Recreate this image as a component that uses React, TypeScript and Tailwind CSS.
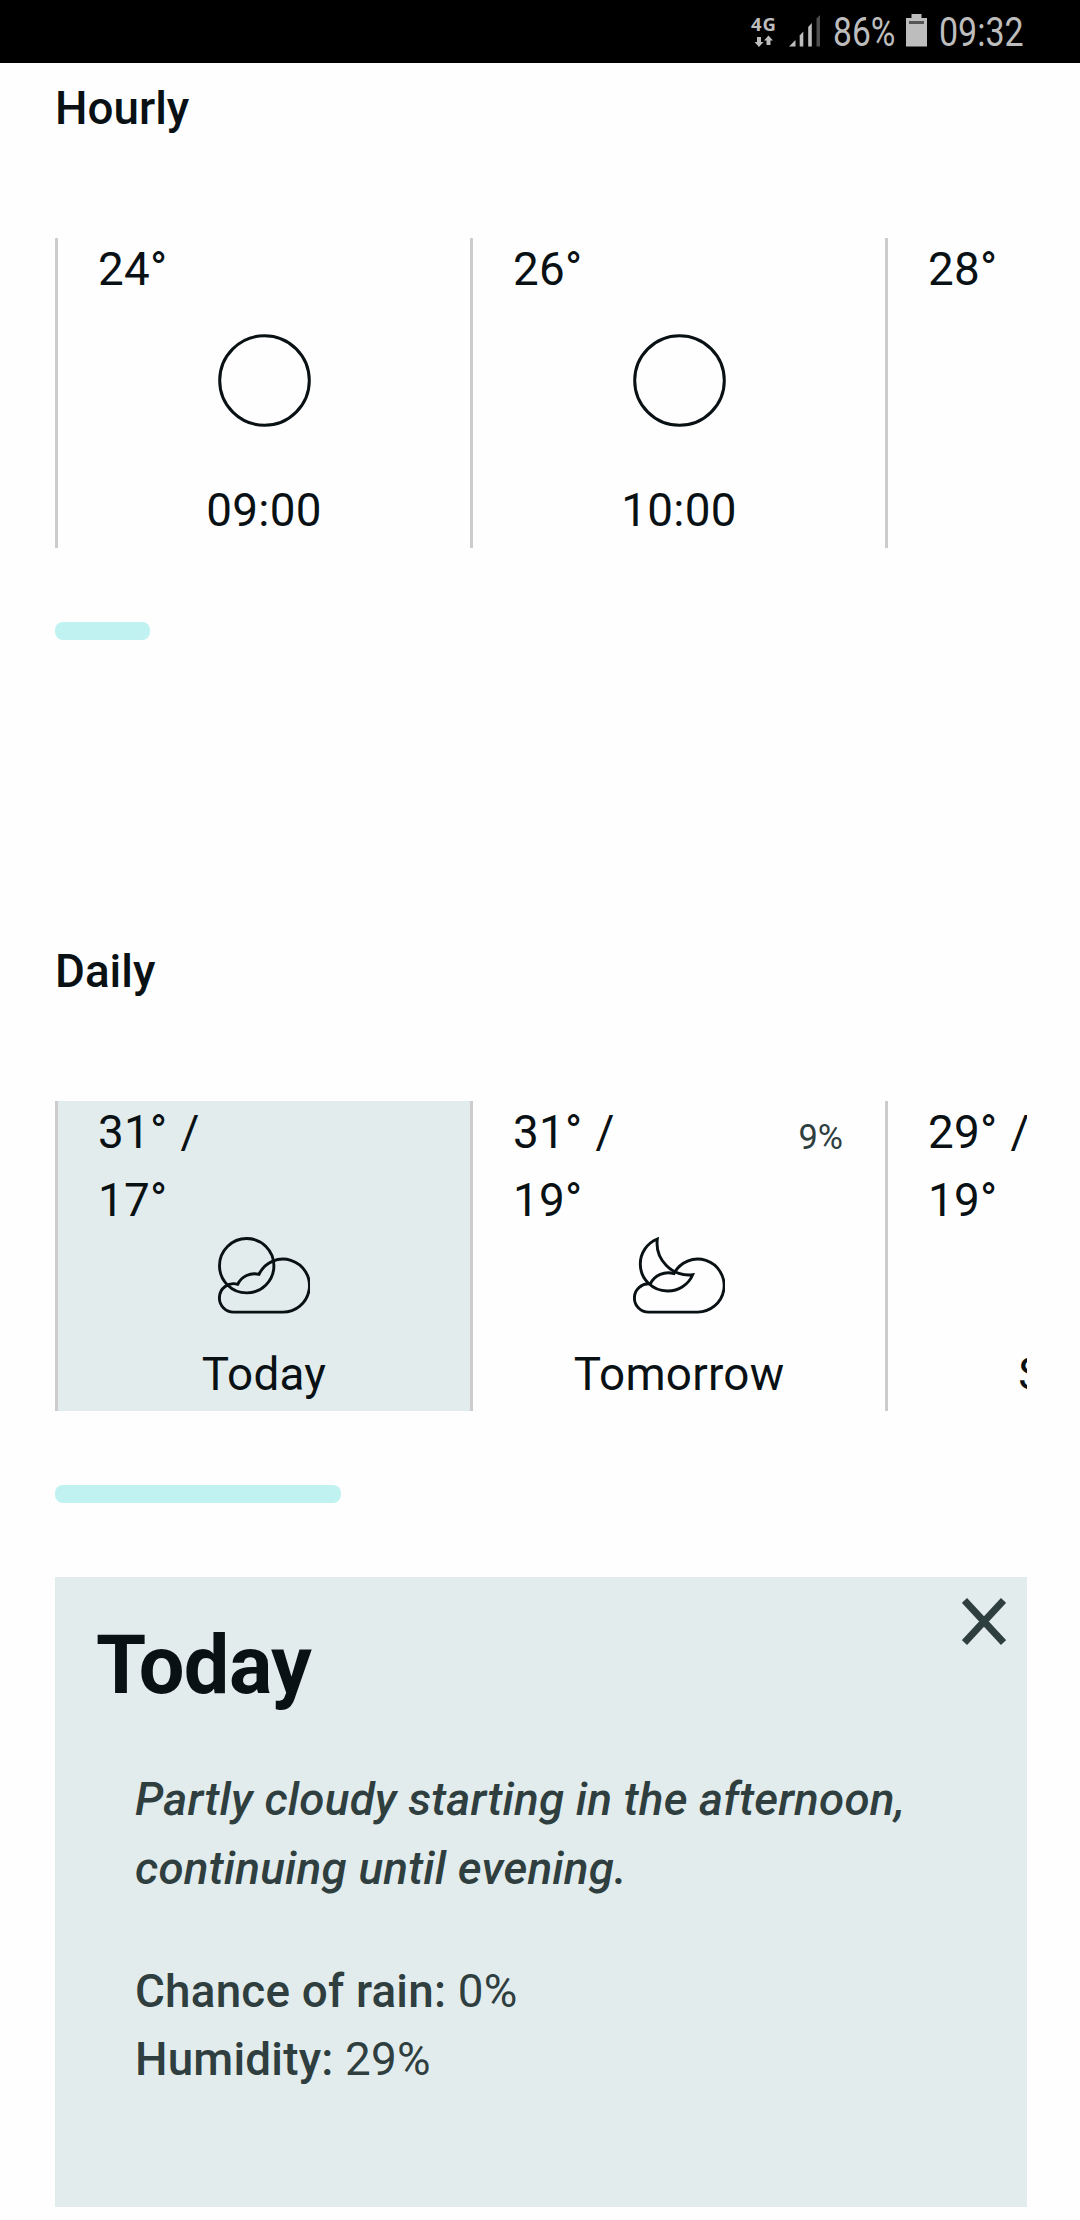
import type { ReactNode } from "react";

const INK = "#091114";

function Sun() {
  return (
    <svg viewBox="0 0 93 93" className="block h-[93px] w-[93px]" fill="none" stroke={INK} strokeWidth="3">
      <circle cx="46.5" cy="46.5" r="44.8" />
    </svg>
  );
}

function CloudSun() {
  return (
    <svg viewBox="0 0 92 78" className="block h-[78px] w-[92px]" fill="none" stroke={INK} strokeWidth="2.9">
      <circle cx="28.7" cy="28.7" r="27.2" />
      <path d="M19.7 47.3A14.2 14.2 0 0 0 1.4 60.9A14.2 14.2 0 0 0 15.6 75.1H64.2A26.5 26.5 0 1 0 41 37.3A18.5 18.5 0 0 0 19.7 47.3Z" />
    </svg>
  );
}

function CloudMoon() {
  return (
    <svg viewBox="0 0 92 78" className="block h-[78px] w-[92px]" fill="none" stroke={INK} strokeWidth="2.9">
      <path d="M24.3 2A27 27 0 0 0 7.3 27A27 27 0 0 0 34.3 54A27 27 0 0 0 59.7 37.7A32 32 0 0 1 24.3 2Z" />
      <path d="M17.3 46.9A14.2 14.2 0 0 0 1.4 60.9A14.2 14.2 0 0 0 15.6 75.1H64.2A26.5 26.5 0 1 0 41 36.6A20 20 0 0 0 17.3 46.9Z" />
    </svg>
  );
}

function StatusBar() {
  return (
    <header className="flex h-[63px] shrink-0 bg-black text-[#bdbdbd]">
      <div className="ml-[751px] flex w-[38px] flex-col pt-[14px]">
        <span className="h-[20px] font-['Open_Sans',sans-serif] text-[18.5px] leading-[20px] font-bold tracking-[1px]">
          4G
        </span>
        <svg viewBox="0 0 20 12" className="mt-[1px] ml-[3px] block h-[12px] w-[20px]" fill="currentColor">
          <path d="M3 2H7V7H9.5L5 12L.5 7H3Z" />
          <path d="M12.5 10H16.5V5.5H19L14.5 .5L10 5.5H12.5Z" />
        </svg>
      </div>
      <svg viewBox="0 0 32 32" className="mt-[15px] block h-[32px] w-[32px]" fill="currentColor">
        <path d="M0 31.5L6.5 25V31.5Z" />
        <path d="M10.7 20.5L14.3 16.5V31.5H10.7Z" />
        <path d="M19.2 12L22.8 8V31.5H19.2Z" />
        <path d="M27.5 3.5L31 0V31.5H27.5Z" fill="#4d4d4d" />
      </svg>
      <span className="ml-[12px] w-[73px] origin-left scale-x-[0.84] text-[40px] leading-[66px]">86%</span>
      <svg viewBox="0 0 21 33" className="mt-[14px] block h-[33px] w-[21px]" fill="currentColor">
        <path d="M5.5 0H15.5V4H21V32.5H0V4H5.5Z" />
        <rect x="3" y="7" width="15" height="3" fill="#555" />
      </svg>
      <span className="ml-[12px] origin-left scale-x-[0.85] text-[40px] leading-[66px]">09:32</span>
    </header>
  );
}

interface SlotProps {
  high: string;
  low?: string;
  chance?: string;
  label?: string;
  icon?: ReactNode;
  selected?: boolean;
}

function Slot({ high, low, chance, label, icon, selected }: SlotProps) {
  return (
    <li
      className={
        "flex h-[310px] w-[415px] shrink-0 flex-col border-l-[3px] border-[#cccccc] tracking-[0.25px] " +
        (selected ? "bg-[#e3eced]" : "")
      }
    >
      <div
        className={
          "-mt-[2px] flex justify-between pr-[42px] pl-[40px] " + (low ? "h-[138px]" : "h-[98px]")
        }
      >
        <p className="[word-spacing:1.5px]">
          {high}
          {low && (
            <>
              <br />
              {low}
            </>
          )}
        </p>
        {chance && <p className="text-[34.4px] leading-[76px] tracking-normal text-[#2f3e3e]">{chance}</p>}
      </div>
      <div className={low ? "flex h-[104px] justify-center" : "flex h-[143px] justify-center"}>{icon}</div>
      <p className="text-center">{label}</p>
    </li>
  );
}

function Forecast({ title, width, children }: { title: string; width: string; children: ReactNode }) {
  return (
    <section className="h-[863px] shrink-0">
      <h2 className="font-medium">{title}</h2>
      <ul className="mt-[94px] flex overflow-x-clip">{children}</ul>
      <div className={"mt-[74px] h-[18px] rounded-[8px] bg-[#bff2f0] " + width} />
    </section>
  );
}

export default function App() {
  return (
    <div className="flex h-[2220px] w-[1080px] flex-col overflow-hidden bg-[#fefefe] font-['Roboto',sans-serif] text-[45.8px] leading-[68.7px] text-[#091114]">
      <StatusBar />
      <main className="mr-[53.5px] ml-[55px] flex flex-col pt-[12px]">
        <Forecast title="Hourly" width="w-[95px]">
          <Slot high="24°" label="09:00" icon={<Sun />} />
          <Slot high="26°" label="10:00" icon={<Sun />} />
          <Slot high="28°" />
        </Forecast>
        <div className="h-[638.6px]">
          <Forecast title="Daily" width="w-[286px]">
            <Slot high="31° /" low="17°" label="Today" icon={<CloudSun />} selected />
            <Slot high="31° /" low="19°" chance="9%" label="Tomorrow" icon={<CloudMoon />} />
            <Slot high="29° /" low="19°" label="Sunday" />
          </Forecast>
        </div>
        <article className="relative h-[630px] bg-[#e3eced]">
          <h3 className="pt-[37px] pl-[41px] text-[81px] leading-[103px] font-bold tracking-[-0.6px]">Today</h3>
          <button aria-label="Close" className="absolute top-[21px] right-[21px]">
            <svg viewBox="0 0 44 47" className="block h-[47px] w-[44px]" fill="none" stroke="#2f3e3e" strokeWidth="7">
              <path d="M2.5 2.5L41.5 44.5M41.5 2.5L2.5 44.5" />
            </svg>
          </button>
          <div className="mt-[49.5px] ml-[80px] tracking-[0.2px] text-[#2f3e3e]">
            <p className="font-medium italic">
              Partly cloudy starting in the afternoon,
              <br />
              continuing until evening.
            </p>
            <p className="mt-[54px]">
              <span className="font-medium">Chance of rain:</span> 0%
            </p>
            <p>
              <span className="font-medium">Humidity:</span> 29%
            </p>
          </div>
        </article>
      </main>
    </div>
  );
}
